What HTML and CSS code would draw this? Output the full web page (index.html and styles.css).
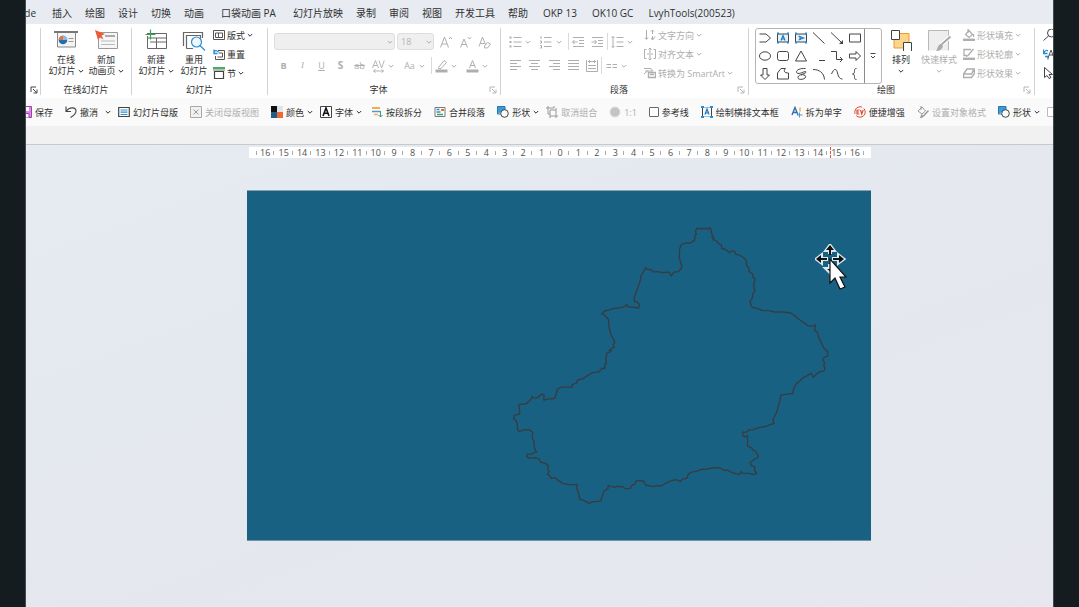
FILE: index.html
```html
<!DOCTYPE html>
<html lang="zh-CN">
<head>
<meta charset="utf-8">
<title>幻灯片编辑</title>
<link rel="stylesheet" href="styles.css">
</head>
<body>
<svg class="sprite" aria-hidden="true">
  <symbol id="chev" viewBox="0 0 6 6"><path d="M.8 2 3 4.2 5.2 2" fill="none" stroke="currentColor"/></symbol>
  <symbol id="launch" viewBox="0 0 8 8"><path d="M1 6V1h5M3 3l3.500 3.500M7 3.500V7H3.500" fill="none" stroke="currentColor" stroke-width=".9"/></symbol>
  <symbol id="shapes" viewBox="0 0 12 12"><path d="M.5 8V.5H8V4" fill="#3d9ad8" stroke="#2379b8"/><path d="M.5 8H4" stroke="#2379b8"/><circle cx="7.500" cy="7.500" r="3.800" fill="#fafafa" stroke="#444"/></symbol>
</svg>
<div class="app">
  <nav class="tabs" aria-label="功能区">
    <button class="tab tab-cut">de</button>
    <button class="tab">插入</button>
    <button class="tab">绘图</button>
    <button class="tab">设计</button>
    <button class="tab">切换</button>
    <button class="tab">动画</button>
    <button class="tab tab-wide">口袋动画 PA</button>
    <button class="tab tab-wide">幻灯片放映</button>
    <button class="tab">录制</button>
    <button class="tab">审阅</button>
    <button class="tab">视图</button>
    <button class="tab">开发工具</button>
    <button class="tab">帮助</button>
    <button class="tab tab-addin">OKP 13</button>
    <button class="tab tab-addin">OK10 GC</button>
    <button class="tab tab-addin">LvyhTools(200523)</button>
  </nav>

  <div class="ribbon">
    <section class="group group-cut">
      <div class="group-body"></div>
      <div class="group-foot"><h2></h2><button class="launcher" aria-label="更多设置"><svg><use href="#launch"/></svg></button></div>
    </section>

    <section class="group group-online">
      <div class="group-body">
        <button class="big">
          <svg class="i-big" viewBox="0 0 24 20"><path d="M3.500 2v15h18V2" fill="#f4f4f4" stroke="#888"/><path d="M0 2h24" stroke="#777" stroke-width="2"/><circle cx="9" cy="10" r="4.300" fill="#1f6fb5"/><path d="M9 10V5.700A4.300 4.300 0 0 0 4.700 10z" fill="#e8743b"/><path d="M9 10h4.300A4.300 4.300 0 0 0 9 5.700z" fill="#8fb8dc"/><path d="M14.500 8.500h5M14.500 11.500h5" stroke="#999"/></svg>
          <span>在线</span><span class="with-chev">幻灯片<svg class="chev"><use href="#chev"/></svg></span>
        </button>
        <button class="big">
          <svg class="i-big" viewBox="0 0 24 20"><path d="M4.500 2.500h19v16h-19z" fill="#f6f6f6" stroke="#999"/><path d="M11 6h10" stroke="#aaa" stroke-width="2"/><path d="M7 11h14M7 14.500h14" stroke="#bbb"/><path d="M1 0l10 4-3.500 1.500 2 4-3.500-2L4 10z" fill="#ee5a36"/></svg>
          <span>新加</span><span class="with-chev">动画页<svg class="chev"><use href="#chev"/></svg></span>
        </button>
      </div>
      <div class="group-foot"><h2>在线幻灯片</h2></div>
    </section>

    <section class="group group-slides">
      <div class="group-body">
        <button class="big">
          <svg class="i-big" viewBox="0 0 24 20"><path d="M3 3.500h19.500v15H3.500V6M4 8h18M12.500 8v10M6 12h16" fill="none" stroke="#666"/><path d="M6.500-.5v10M1.500 4.500h10" stroke="#2fa84f" stroke-width="1.200"/></svg>
          <span>新建</span><span class="with-chev">幻灯片<svg class="chev"><use href="#chev"/></svg></span>
        </button>
        <button class="big">
          <svg class="i-big" viewBox="0 0 24 20"><path d="M1.500 16V2.500h19V8M4.500 18.500v-13h14v3M4.500 18.500H11" fill="none" stroke="#666" stroke-width="1.200"/><circle cx="14.500" cy="12" r="5" fill="#eef7fd" stroke="#2a8fd0" stroke-width="1.200"/><path d="M18 15.500l5 5" stroke="#2a8fd0" stroke-width="1.300"/></svg>
          <span>重用</span><span>幻灯片</span>
        </button>
        <div class="stack">
          <button class="row-btn"><svg class="i12" viewBox="0 0 12 12"><path d="M.5 1.500h11v9H.5zM2.500 4h7M2.500 4v4.500h3V4M5.500 8.500h4V4" fill="none" stroke="#555"/></svg>版式<svg class="chev"><use href="#chev"/></svg></button>
          <button class="row-btn"><svg class="i12" viewBox="0 0 12 12"><path d="M5 2.500h6.500v9h-9V8M5.500 5h4v4h-5" fill="none" stroke="#555"/><path d="M1 5.500C1 2.500 3 1.500 5.500 4M1 1.500v4h3.500" fill="none" stroke="#2a8fd0" stroke-width="1.300"/></svg>重置</button>
          <button class="row-btn"><svg class="i12" viewBox="0 0 12 12"><path d="M0 1h12" stroke="#2fa84f" stroke-width="1.800"/><path d="M1.500 4.500h9v7h-9z" fill="none" stroke="#444" stroke-width="1.200"/><path d="M0 3h12" stroke="#777"/></svg>节<svg class="chev"><use href="#chev"/></svg></button>
        </div>
      </div>
      <div class="group-foot"><h2>幻灯片</h2></div>
    </section>

    <section class="group group-font">
      <div class="group-body is-off">
        <div class="tool-rows">
          <div class="tool-row">
            <span class="pick pick-font"><select disabled aria-label="字体"><option></option></select><svg class="chev"><use href="#chev"/></svg></span>
            <span class="pick pick-size"><select disabled aria-label="字号"><option>18</option></select><svg class="chev"><use href="#chev"/></svg></span>
            <button class="tool" disabled aria-label="增大字号"><svg class="i14" viewBox="0 0 14 14"><path d="M1.500 12.500L5.500 2l4 10.500M3 9h5M10 4l1.500-1.800L13 4" fill="none" stroke="currentColor"/></svg></button>
            <button class="tool" disabled aria-label="减小字号"><svg class="i14" viewBox="0 0 14 14"><path d="M2.500 12.500L6 4l3.500 8.500M4 9.500h4M10 2.200L11.500 4 13 2.200" fill="none" stroke="currentColor"/></svg></button>
            <button class="tool" disabled aria-label="清除格式"><svg class="i14" viewBox="0 0 14 14"><path d="M2 11.500L5.500 2l3 7.500M3.500 8.500h4M7.500 11l3-3.500 3 1.500-3 4-3-.2z" fill="none" stroke="currentColor"/></svg></button>
          </div>
          <div class="tool-row">
            <button class="tool bold" disabled>B</button>
            <button class="tool italic" disabled>I</button>
            <button class="tool under" disabled>U</button>
            <button class="tool bold shadow" disabled>S</button>
            <button class="tool strike" disabled>ab</button>
            <button class="tool drop" disabled aria-label="字符间距"><svg class="i14" viewBox="0 0 14 14"><path d="M1 9l3-7.500L7 9M2 6.500h4M7.500 1.500L10 9l2.800-7.500M2 12h10M4 10.500L2 12l2 1.500M10 10.500l2 1.500-2 1.500" fill="none" stroke="currentColor" stroke-width=".9"/></svg><svg class="chev"><use href="#chev"/></svg></button>
            <button class="tool drop" disabled><span>Aa</span><svg class="chev"><use href="#chev"/></svg></button>
            <span class="sep"></span>
            <button class="tool drop" disabled aria-label="突出显示"><svg class="i14" viewBox="0 0 14 14"><path d="M1 12h12" stroke="currentColor" stroke-width="3"/><path d="M4 8.500L9.500 1.500l2.500 2-5.500 6H4z" fill="none" stroke="currentColor"/></svg><svg class="chev"><use href="#chev"/></svg></button>
            <button class="tool drop" disabled aria-label="字体颜色"><svg class="i14" viewBox="0 0 14 14"><path d="M1 12h12" stroke="currentColor" stroke-width="3"/><path d="M4 9l3-7.500L10 9M5 6.500h4" fill="none" stroke="currentColor"/></svg><svg class="chev"><use href="#chev"/></svg></button>
          </div>
        </div>
      </div>
      <div class="group-foot"><h2>字体</h2><button class="launcher is-off" aria-label="字体设置"><svg><use href="#launch"/></svg></button></div>
    </section>

    <section class="group group-para">
      <div class="group-body is-off">
        <div class="tool-rows">
          <div class="tool-row">
            <button class="tool drop" disabled aria-label="项目符号"><svg class="i14" viewBox="0 0 14 14"><path d="M1 2.500h2M1 7h2M1 11.500h2" stroke="currentColor" stroke-width="2"/><path d="M5 2.500h8M5 7h8M5 11.500h8" stroke="currentColor"/></svg><svg class="chev"><use href="#chev"/></svg></button>
            <button class="tool drop" disabled aria-label="编号"><svg class="i14" viewBox="0 0 14 14"><path d="M1.500 1v3M.5 6H2v2H.5M.5 10.500H2V13H.5M4.500 2.500H12M4.500 7H12M4.500 11.500H12" fill="none" stroke="currentColor"/></svg><svg class="chev"><use href="#chev"/></svg></button>
            <span class="sep"></span>
            <button class="tool" disabled aria-label="减少缩进"><svg class="i14" viewBox="0 0 14 14"><path d="M1 2.500h11M7 5.500h5M7 8.500h5M1 11.500h11M5.500 7h-5M2.500 5l-2 2 2 2" fill="none" stroke="currentColor"/></svg></button>
            <button class="tool" disabled aria-label="增加缩进"><svg class="i14" viewBox="0 0 14 14"><path d="M1 2.500h11M7 5.500h5M7 8.500h5M1 11.500h11M.5 7h5M3.500 5l2 2-2 2" fill="none" stroke="currentColor"/></svg></button>
            <span class="sep"></span>
            <button class="tool drop" disabled aria-label="行距"><svg class="i14" viewBox="0 0 14 14"><path d="M2.500 1.500v11M1 3l1.500-1.500L4 3M1 11l1.500 1.500L4 11M6 2.500h7M6 7h7M6 11.500h7" fill="none" stroke="currentColor"/></svg><svg class="chev"><use href="#chev"/></svg></button>
          </div>
          <div class="tool-row">
            <button class="tool" disabled aria-label="左对齐"><svg class="i14" viewBox="0 0 14 14"><path d="M1 1.500h11M1 4.500h7M1 7.500h11M1 10.500h7" stroke="currentColor"/></svg></button>
            <button class="tool" disabled aria-label="居中"><svg class="i14" viewBox="0 0 14 14"><path d="M1 1.500h11M3 4.500h7M1 7.500h11M3 10.500h7" stroke="currentColor"/></svg></button>
            <button class="tool" disabled aria-label="右对齐"><svg class="i14" viewBox="0 0 14 14"><path d="M2 1.500h11M6 4.500h7M2 7.500h11M6 10.500h7" stroke="currentColor"/></svg></button>
            <button class="tool" disabled aria-label="两端对齐"><svg class="i14" viewBox="0 0 14 14"><path d="M2 1.500h11M2 4.500h11M2 7.500h11M2 10.500h11" stroke="currentColor"/></svg></button>
            <button class="tool" disabled aria-label="分散对齐"><svg class="i14" viewBox="0 0 14 14"><path d="M1.500 1v11.500h11V1M3 2.500h8M4.500 1v3M9.500 1v3M3 6.500h8M3 9.500h8" fill="none" stroke="currentColor"/></svg></button>
            <span class="sep"></span>
            <button class="tool drop" disabled aria-label="分栏"><svg class="i14" viewBox="0 0 14 14"><path d="M2 5.500h4.500M8 5.500h4.500M2 8.500h4.500M8 8.500h4.500" stroke="currentColor"/></svg><svg class="chev"><use href="#chev"/></svg></button>
          </div>
        </div>
        <div class="stack">
          <button class="row-btn" disabled><svg class="i12" viewBox="0 0 12 12"><path d="M2.500 1v9M1 8.500L2.500 10.500 4 8.500M8.500 11V7M7 2.500L8.500 1 10 2.500M8.500 1v4M7 9l1.500 2L11 7.500" fill="none" stroke="currentColor"/></svg>文字方向<svg class="chev"><use href="#chev"/></svg></button>
          <button class="row-btn" disabled><svg class="i12" viewBox="0 0 12 12"><path d="M2.500 1.500h-2v9h2M9.500 1.500h2v9h-2M6 0v5M4.500 1.500L6 0l1.500 1.500M6 12V7M4.500 10.500L6 12l1.500-1.500M3 6h6" fill="none" stroke="currentColor"/></svg>对齐文本<svg class="chev"><use href="#chev"/></svg></button>
          <button class="row-btn" disabled><svg class="i12" viewBox="0 0 12 12"><path d="M0 1.500h7l2 2.500H3.500L0 7M1 4h3" fill="none" stroke="currentColor"/><path d="M4.500 5.500h7v5h-7zM6 7.500h4" fill="none" stroke="currentColor" stroke-width="1.400"/></svg>转换为 SmartArt<svg class="chev"><use href="#chev"/></svg></button>
        </div>
      </div>
      <div class="group-foot"><h2>段落</h2><button class="launcher is-off" aria-label="段落设置"><svg><use href="#launch"/></svg></button></div>
    </section>

    <section class="group group-draw">
      <div class="group-body">
        <div class="gallery">
          <div class="gallery-grid">
            <button aria-label="延期"><svg class="i14" viewBox="0 0 14 14"><path d="M1.500 3H8l4.500 4L8 11H1.500" fill="none" stroke="#444"/></svg></button>
            <button aria-label="横排文本框"><svg class="i14" viewBox="0 0 14 14"><path d="M1.500 3h11v8h-11z" fill="#e6f3fc" stroke="#444"/><path d="M1 2.500h2M11 2.500h2M1 11.500h2M11 11.500h2" stroke="#2a8fd0" stroke-width="2"/><path d="M5 9.500L7 4.500l2 5M5.500 8h3" fill="none" stroke="#1b78bd" stroke-width="1.200"/></svg></button>
            <button aria-label="竖排文本框"><svg class="i14" viewBox="0 0 14 14"><path d="M1.500 3h11v8h-11z" fill="#e6f3fc" stroke="#444"/><path d="M1 2.500h2M11 2.500h2M1 11.500h2M11 11.500h2" stroke="#2a8fd0" stroke-width="2"/><path d="M4.500 5l5 2-5 2M6 5.500v3" fill="none" stroke="#1b78bd" stroke-width="1.200"/></svg></button>
            <button aria-label="直线"><svg class="i14" viewBox="0 0 14 14"><path d="M1 1.500l11.500 11" stroke="#444"/></svg></button>
            <button aria-label="箭头"><svg class="i14" viewBox="0 0 14 14"><path d="M1 1.500l11 10.500" stroke="#444"/><path d="M13 13H9l4-4z" fill="#444"/></svg></button>
            <button aria-label="矩形"><svg class="i14" viewBox="0 0 14 14"><path d="M1.500 3h11v8h-11z" fill="none" stroke="#444"/></svg></button>
            <button aria-label="椭圆"><svg class="i14" viewBox="0 0 14 14"><ellipse cx="7" cy="7" rx="5.500" ry="4.200" fill="none" stroke="#444"/></svg></button>
            <button aria-label="圆角矩形"><svg class="i14" viewBox="0 0 14 14"><rect x="1.500" y="2.500" width="11" height="9" rx="2" fill="none" stroke="#444"/></svg></button>
            <button aria-label="三角形"><svg class="i14" viewBox="0 0 14 14"><path d="M7 2l5.500 10h-11z" fill="none" stroke="#444"/></svg></button>
            <button aria-label="连接线"><svg class="i14" viewBox="0 0 14 14"><path d="M7 11.500h6" stroke="#444"/></svg></button>
            <button aria-label="肘形箭头"><svg class="i14" viewBox="0 0 14 14"><path d="M1 2.500h5.500v8H12M10 8l2.500 2.500L10 13" fill="none" stroke="#444"/></svg></button>
            <button aria-label="右箭头"><svg class="i14" viewBox="0 0 14 14"><path d="M1.500 5H8V2.500L12.500 7 8 11.500V9H1.500z" fill="none" stroke="#444"/></svg></button>
            <button aria-label="下箭头"><svg class="i14" viewBox="0 0 14 14"><path d="M5 1.500h4V8h2.500L7 12.500 2.500 8H5z" fill="none" stroke="#444"/></svg></button>
            <button aria-label="任意多边形"><svg class="i14" viewBox="0 0 14 14"><path d="M1.500 12V6L5 1.500h4.500C7 4 8.500 6 12.500 6v6z" fill="none" stroke="#444"/></svg></button>
            <button aria-label="自由曲线"><svg class="i14" viewBox="0 0 14 14"><path d="M11.500 1.500C5 1 1 4 3 6s9-3 9-1-7 2-8 5 5 3 7 1-1-4-4-3" fill="none" stroke="#444"/></svg></button>
            <button aria-label="弧形"><svg class="i14" viewBox="0 0 14 14"><path d="M1 2.500c6 0 11 3 11.500 10" fill="none" stroke="#444"/></svg></button>
            <button aria-label="曲线"><svg class="i14" viewBox="0 0 14 14"><path d="M1.500 7C4 1 6.500 1 7.500 6s3 6 5 6" fill="none" stroke="#444"/></svg></button>
            <button aria-label="左大括号"><svg class="i14" viewBox="0 0 14 14"><path d="M8.500 1.500C7 1.500 6.500 2 6.500 3.500S6.500 7 4.500 7c2 0 2 2 2 3.500s.5 2 2 2" fill="none" stroke="#444"/></svg></button>
          </div>
          <button class="gallery-more" aria-label="更多形状"><svg class="i14" viewBox="0 0 14 14"><path d="M4.500 4.500h5M5 7l2 2 2-2" fill="none" stroke="#444"/></svg></button>
        </div>
        <button class="big">
          <svg class="i-big" viewBox="0 0 24 20"><path d="M5 3.500h15V18H5z" fill="#fcd58a" stroke="#f09a2e"/><path d="M2.500.5h8v9h-8z" fill="#fff" stroke="#444"/><path d="M14.500 21v-8.500h8V21" fill="#fff" stroke="#444"/></svg>
          <span>排列</span><svg class="chev"><use href="#chev"/></svg>
        </button>
        <button class="big" disabled>
          <svg class="i-big" viewBox="0 0 24 20"><path d="M1.500 20.500V.5h20v20" fill="#eee" stroke="#b8b8b8"/><path d="M23.500 6.500L14 15" stroke="#fff" stroke-width="4"/><path d="M23.500 6.500L14 15" stroke="#aaa" stroke-width="2"/><path d="M14 14l2 2c-1 4-4 5-7 5 2-2 1-6 5-7z" fill="#aaa"/></svg>
          <span>快速样式</span><svg class="chev"><use href="#chev"/></svg>
        </button>
        <div class="stack stack-end">
          <button class="row-btn" disabled><svg class="i12" viewBox="0 0 12 12"><path d="M0 10.800h12" stroke="currentColor" stroke-width="2.400"/><path d="M2.500 5.500L6 1.500l3.500 4L6 8.500zM5 0v4M10.500 5v3" fill="none" stroke="currentColor" stroke-width="1.200"/></svg>形状填充<svg class="chev"><use href="#chev"/></svg></button>
          <button class="row-btn" disabled><svg class="i12" viewBox="0 0 12 12"><path d="M0 10.800h12" stroke="currentColor" stroke-width="2.400"/><path d="M8 1.500H1v6h3M10.500 1L5 7.500l-2 1" fill="none" stroke="currentColor" stroke-width="1.300"/></svg>形状轮廓<svg class="chev"><use href="#chev"/></svg></button>
          <button class="row-btn" disabled><svg class="i12" viewBox="0 0 12 12"><path d="M4 2h7L8.500 7h-8zM.5 7.500v3h8l3-4V2.500" fill="none" stroke="currentColor" stroke-width="1.500"/></svg>形状效果<svg class="chev"><use href="#chev"/></svg></button>
        </div>
      </div>
      <div class="group-foot"><h2>绘图</h2><button class="launcher is-off" aria-label="绘图设置"><svg><use href="#launch"/></svg></button></div>
    </section>

    <section class="group group-edit">
      <div class="group-body">
        <div class="stack">
          <button class="row-btn" aria-label="查找"><svg class="i12" viewBox="0 0 12 12"><circle cx="8.500" cy="4" r="4" fill="none" stroke="#444"/><path d="M5.500 7L.5 11.500" stroke="#444"/></svg></button>
          <button class="row-btn" aria-label="替换"><svg class="i12" viewBox="0 0 12 12"><path d="M.5 1.500v4h4M1 5c1-3 3-3 4-2M2 8.500h3v3" fill="none" stroke="#2a8fd0" stroke-width="1.300"/><path d="M5 10l3-8 3 8M6 7h4" fill="none" stroke="#555"/></svg></button>
          <button class="row-btn" aria-label="选择"><svg class="i12" viewBox="0 0 12 12"><path d="M1.500.5v10L4 8.500l2 3 2-1-2-3h3.500z" fill="#fff" stroke="#444"/></svg></button>
        </div>
      </div>
    </section>
  </div>

  <div class="quickbar">
    <div class="quick-set">
      <button class="quick"><svg class="i12" viewBox="0 0 12 12"><path d="M.5.5h11v11H.5z" fill="#d58be0" stroke="#a63cb5"/><path d="M3 1h6v4H3z" fill="#fff"/><path d="M3 7.500h6V12H3z" fill="#fff" stroke="#a63cb5"/></svg>保存</button>
      <button class="quick quick-undo"><svg class="i12" viewBox="0 0 12 12"><path d="M1 .5v5h5M1 5.500C5 0 11 1.500 11 5c0 3-3 5-5.500 6.500" fill="none" stroke="#444" stroke-width="1.100"/></svg>撤消<svg class="chev"><use href="#chev"/></svg></button>
      <button class="quick"><svg class="i12" viewBox="0 0 12 12"><path d="M.7 1.500h10.600v9H.7z" fill="#fff" stroke="#444" stroke-width="1.200"/><path d="M2.500 4h7M2.500 6.200h7M2.500 8.500h7" stroke="#2a8fd0" stroke-width="1.200"/></svg>幻灯片母版</button>
      <button class="quick" disabled><svg class="i12" viewBox="0 0 12 12"><path d="M.5.5h11v11H.5z" fill="#f2f2f2" stroke="#aaa"/><path d="M3.500 3.500l5 5M8.500 3.500l-5 5" stroke="#999"/></svg>关闭母版视图</button>
      <button class="quick"><svg class="i12" viewBox="0 0 12 12"><path d="M0 0h6v6H0z" fill="#111"/><path d="M6 0h6v6H6z" fill="#dce5ec"/><path d="M0 6h6v6H0z" fill="#1d5f86"/><path d="M6 6h6v6H6z" fill="#ec6a32"/></svg>颜色<svg class="chev"><use href="#chev"/></svg></button>
      <button class="quick"><svg class="i12" viewBox="0 0 12 12"><path d="M.5.5h11v11H.5z" fill="#fff" stroke="#444"/><path d="M3 10l3-8 3 8M4 7.200h4" fill="none" stroke="#111" stroke-width="1.600"/></svg>字体<svg class="chev"><use href="#chev"/></svg></button>
    </div>
    <div class="quick-set">
      <button class="quick"><svg class="i12" viewBox="0 0 12 12"><path d="M1 2h8" stroke="#efb04c" stroke-width="2"/><path d="M1 5.500h8" stroke="#5c95c6" stroke-width="1.500"/><path d="M3 8.500h4" stroke="#efb04c" stroke-width="1.500"/><path d="M9.500 5v6M7.500 9l2 2 2-2" fill="none" stroke="#2a9d8f"/></svg>按段拆分</button>
      <button class="quick"><svg class="i12" viewBox="0 0 12 12"><path d="M1 1.500h10v9H1z" fill="#fff" stroke="#777"/><path d="M2.500 3.500h3M2.500 6h4" stroke="#2a8fd0" stroke-width="1.500"/><path d="M7 4h3" stroke="#ec6a32" stroke-width="2"/><path d="M3 8.500h6" stroke="#3aa35b" stroke-width="1.500"/></svg>合并段落</button>
      <button class="quick"><svg class="i12"><use href="#shapes"/></svg>形状<svg class="chev"><use href="#chev"/></svg></button>
      <button class="quick" disabled><svg class="i12" viewBox="0 0 12 12"><path d="M2 0v8M0 2h8V0M4 4h6v6H4zM10 2v2M2 8h2M10 10v2M12 10h-2M4 10v2" fill="none" stroke="#999"/></svg>取消组合</button>
      <button class="quick" disabled><svg class="i12" viewBox="0 0 12 12"><circle cx="6" cy="6" r="5" fill="#c4c4c4" stroke="#ddd"/></svg>1:1</button>
      <label class="quick"><input type="checkbox">参考线</label>
      <button class="quick"><svg class="i12" viewBox="0 0 12 12"><path d="M1.500 1.500v9M10.500 1.500v9" stroke="#444"/><path d="M1.500 1.500h9M1.500 10.500h9" stroke="#8cc4ea"/><path d="M0 1h3M9 1h3M0 11h3M9 11h3" stroke="#2a8fd0" stroke-width="2"/><path d="M4 8.500L6 3l2 5.500M4.500 7h3" fill="none" stroke="#1b78bd" stroke-width="1.200"/></svg>绘制横排文本框</button>
      <button class="quick"><svg class="i12" viewBox="0 0 12 12"><path d="M1 9L4 1.500 7 9M2 6.500h4" fill="none" stroke="#2f6eb0" stroke-width="1.400"/><path d="M9 1.500v4" stroke="#efb04c" stroke-width="1.500"/><path d="M8.500 6.500v5M6 9h5.500" stroke="#4a9ad4"/></svg>拆为单字</button>
      <button class="quick"><svg class="i12" viewBox="0 0 12 12"><circle cx="6" cy="6" r="5.200" fill="#fff" stroke="#dc4a33" stroke-dasharray="12 2"/><path d="M5.500 4H3v4h2.500M3 6h2M6.500 4l1.300 4L9.200 4" fill="none" stroke="#dc4a33" stroke-width="1.200"/></svg>便捷增强</button>
      <button class="quick" disabled><svg class="i12" viewBox="0 0 12 12"><path d="M1 5l4-4 3.500 4L5 8zM4 0v4" fill="none" stroke="#999"/><path d="M11.500 4.500L7 9.500l-3 2 1-3" fill="none" stroke="#999" stroke-width="1.500"/></svg>设置对象格式</button>
      <button class="quick"><svg class="i12"><use href="#shapes"/></svg>形状<svg class="chev"><use href="#chev"/></svg></button>
      <label class="quick"><input type="checkbox" disabled aria-label="选项"></label>
    </div>
  </div>
  <div class="strip"></div>

  <main class="workspace">
    <div class="ruler">
      <ol>
        <li>16</li><li>15</li><li>14</li><li>13</li><li>12</li><li>11</li><li>10</li><li>9</li><li>8</li><li>7</li><li>6</li><li>5</li><li>4</li><li>3</li><li>2</li><li>1</li><li>0</li><li>1</li><li>2</li><li>3</li><li>4</li><li>5</li><li>6</li><li>7</li><li>8</li><li>9</li><li>10</li><li>11</li><li>12</li><li>13</li><li>14</li><li>15</li><li>16</li>
      </ol>
      <span class="ruler-mark"></span>
    </div>
    <div class="slide">
      <svg class="map" viewBox="0 0 1872 1053" role="img" aria-label="地图轮廓">
        <path transform="translate(1029 -3)" d="M33 540L46 537 45 527 50 522 48 513 51 493 60 489 65 485 58 484 66 478 74 474 70 466 75 461 70 447 65 440 58 415 56 390 50 384 43 376 35 374 40 370 44 365 58 362 75 357 95 355 106 351 110 345 117 353 133 354 147 356 150 346 144 339 135 337 134 325 138 313 148 286 153 270 154 260 159 252 168 234 172 239 185 240 192 247 205 246 219 249 239 248 246 259 254 248 267 246 276 237 278 232 272 212 270 203 271 177 277 163 290 160 304 160 317 151 316 139 322 132 318 126 323 116 340 117 353 116 358 119 361 113 366 118 367 131 371 138 368 142 375 143 371 150 382 153 388 162 397 166 398 176 412 181 421 189 429 184 438 187 440 194 451 196 462 203 471 211 474 229 481 237 480 245 491 253 493 264 499 269 494 286 498 305 492 312 490 326 483 337 489 354 505 357 520 363 540 364 556 368 583 368 606 371 616 378 627 387 657 409 673 411 681 407 678 423 687 430 691 446 703 469 705 476 718 489 718 501 708 504 703 513 709 521 706 526 709 540"/>
        <path transform="translate(759 507)" d="M979 30L976 36 965 38 955 44 944 55 938 43 930 47 926 50 911 58 905 65 892 76 885 90 882 104 866 106 846 109 844 124 838 145 833 162 822 184 826 194 800 203 780 207 763 213 749 214 744 220 731 221 731 230 738 235 746 231 746 263 759 268 761 274 771 279 778 293 778 297 762 305 754 313 757 321 768 325 767 335 773 345 764 349 750 345 730 344 727 340 722 348 710 346 697 341 686 335 676 336 662 328 642 328 621 333 610 332 593 338 577 341 567 347 563 359 549 363 543 370 531 364 516 367 500 374 486 383 471 382 463 385 438 380 432 368 413 366 409 369 406 378 398 380 392 390 376 391 370 385 360 386 356 383 345 387 334 384 325 382 325 391 313 398 309 409 303 428 291 430 278 430 266 436 260 430 240 423 236 405 230 389 232 378 206 379 188 375 170 363 166 358 153 360 149 352 142 348 147 339 143 332 145 323 137 315 122 312 118 303 108 298 87 299 79 293 81 287 95 287 100 283 110 280 104 273 102 265 101 248 96 236 98 222 89 214 73 213 57 219 52 213 51 194 45 183 40 180 42 170 57 166 59 157 55 138 62 137 79 135 94 120 95 113 100 117 113 117 125 105 132 109 131 124 147 120 159 120 165 117 169 104 173 90 184 85 217 85 217 77 231 72 232 64 249 59 276 42 299 38 303 31"/>
      </svg>
      <svg class="cursor" viewBox="0 0 32 46" aria-hidden="true">
        <path d="M15 3v7M13 15H4M17 15h9M15 20v6M15 2l-3 4h6zM2 15l4-3v6zM28 15l-4-3v6zM12 25h6l-3 3z" fill="#dceaf1" stroke="#dceaf1" stroke-width="4"/>
        <path d="M15 3v8M12 15H4M18 15h8" stroke="#111" stroke-width="2"/>
        <path d="M15 1l-4 5h8zM1 15l5-4v8zM29 15l-5-4v8zM12 25h4v3z" fill="#111"/>
        <path d="M15 15v24l5-5 5 11 5-2-5-10h6z" fill="#fff" stroke="#111" stroke-width="1.200"/>
      </svg>
    </div>
  </main>
</div>
</body>
</html>
```
FILE: styles.css
```css
* { box-sizing: border-box; }

body {
  margin: 0;
  background: #151c20;
  color: #303030;
  font: 9px/11px "Open Sans", "Noto Sans CJK SC", sans-serif;
}

button {
  margin: 0;
  padding: 0;
  border: 0;
  background: none;
  color: inherit;
  font: inherit;
  white-space: nowrap;
}

button:disabled, .is-off { color: #aeaeae; }

svg { display: block; flex: none; }
.sprite { position: absolute; width: 0; height: 0; }
.chev { width: 6px; height: 6px; }
.i12 { width: 12px; height: 12px; }
.i14 { width: 14px; height: 14px; }
.i-big { width: 24px; height: 20px; overflow: visible; }

.app {
  display: flex;
  flex-direction: column;
  min-height: 100vh;
  margin: 0 26px;
  overflow: hidden;
  background: #e6eaf0;
  outline: 1px solid #454b4f;
}

/* Tab strip */
.tabs {
  display: flex;
  align-items: center;
  gap: 13px;
  height: 24px;
  padding-top: 2px;
  background: #e8ecf2;
  font-size: 10px;
  line-height: 14px;
}
.tab-cut { display: flex; justify-content: flex-end; width: 10px; margin-right: 3px; }
.tab-wide { margin-left: 4px; }
.tab-addin { margin-left: 2px; }

/* Ribbon */
.ribbon {
  display: flex;
  padding: 4px 0 3px;
  background: #fff;
}
.group {
  display: flex;
  flex: none;
  flex-direction: column;
  border-right: 1px solid #d2d2d2;
}
.group-cut { width: 15px; }
.group-cut .launcher { width: 10px; }
.group-online { width: 91px; }
.group-slides { width: 136px; }
.group-font { width: 233px; }
.group-para { width: 248px; }
.group-draw { width: 286px; }
.group-edit { flex: 1; border: 0; padding-left: 8px; }
.group-body { display: flex; height: 56px; }
.group-online .group-body,
.group-slides .group-body,
.group-para .group-body { padding-left: 5px; }
.group-font .group-body,
.group-draw .group-body { padding-left: 6px; }
.group-foot { display: flex; align-items: center; height: 11px; }
.group-foot h2 {
  flex: 1;
  margin: 0;
  font-size: 9px;
  font-weight: 400;
  text-align: center;
}
.launcher { width: 11px; }
.launcher svg { width: 8px; height: 8px; }

.big {
  display: flex;
  flex-direction: column;
  align-items: center;
  width: 38px;
  padding-top: 2px;
}
.group-online .big { width: 40px; }
.big .i-big { margin-bottom: 4px; }
.big > .chev { margin-top: 3px; }
.with-chev { display: flex; align-items: center; gap: 2px; }

.stack { display: flex; flex-direction: column; gap: 5px; }
.stack-end { padding-left: 5px; }
.row-btn {
  display: flex;
  align-items: center;
  gap: 2px;
  height: 14px;
}

.tool-rows {
  display: flex;
  flex-direction: column;
  gap: 7px;
  padding-top: 5px;
}
.group-para .tool-rows { width: 138px; }
.tool-row { display: flex; height: 17px; }
.tool {
  display: flex;
  align-items: center;
  justify-content: center;
  width: 19px;
}
.drop { justify-content: flex-start; width: 31px; }
.drop > :first-child { width: 19px; }
.drop > .i14 { padding: 0 2px; }
.bold { font-weight: 700; }
.italic { font-style: italic; font-family: "Liberation Serif", serif; }
.under { text-decoration: underline; }
.shadow { font-size: 10px; }
.strike { text-decoration: line-through; }
.sep { width: 1px; background: #dadada; }

.pick { display: grid; align-items: center; margin-right: 2px; }
.pick > * { grid-area: 1 / 1; }
.pick .chev { justify-self: end; margin-right: 2px; }
.pick-font { width: 121px; }
.pick-size { width: 37px; }
.pick select {
  width: 100%;
  height: 17px;
  padding: 0 3px;
  appearance: none;
  border: 1px solid #dedede;
  border-radius: 3px;
  background: #efefef;
  color: #b4b4b4;
  font: inherit;
  opacity: 1;
}

.gallery {
  display: flex;
  width: 127px;
  border: 1px solid #b5b5b5;
  border-radius: 3px;
}
.gallery-grid { display: grid; flex: 1; grid-template-columns: repeat(6, 1fr); }
.gallery-grid button { display: grid; place-items: center; }
.gallery-more {
  display: grid;
  place-items: center;
  width: 17px;
  border-left: 1px solid #8c8c8c;
}

/* Quick access bar */
.quickbar {
  display: flex;
  gap: 14px;
  height: 28px;
  margin-left: -6px;
  background: #fafafa;
}
.quick-set { display: flex; flex: none; align-items: center; gap: 12px; }
.quick { display: flex; align-items: center; gap: 3px; }
.quick .chev { margin-right: -5px; }
.quick-undo .chev { margin-left: 4px; }
.quick input {
  width: 10px;
  height: 10px;
  margin: 0;
  appearance: none;
  border: 1px solid #666;
  border-radius: 1px;
  background: #fff;
}
.quick input:disabled { border-color: #bbb; }

.strip {
  height: 19px;
  border-bottom: 1px solid #c9c9cb;
  background: #f2f1f1;
}

/* Editing area */
.workspace {
  display: grid;
  flex: 1;
  grid-template-columns: 221fr 624fr 182fr;
  grid-template-rows: auto auto;
  align-content: start;
  row-gap: 32px;
  padding-top: 2px;
  background: linear-gradient(160deg, #e6ebf1, #e4e7ee 60%, #e7e8ef);
}
.ruler {
  position: relative;
  grid-column: 2;
  margin: 0 0 0 2px;
  padding: 0 7px;
  background: #fff;
}
.ruler ol {
  display: grid;
  grid-template-columns: repeat(33, 1fr);
  margin: 0;
  padding: 0;
  list-style: none;
  color: #505050;
  text-align: center;
}
.ruler li { background: linear-gradient(#aaa, #aaa) right center / 1px 4px no-repeat; }
.ruler li:first-child {
  background:
    linear-gradient(#aaa, #aaa) left center / 1px 4px no-repeat,
    linear-gradient(#aaa, #aaa) right center / 1px 4px no-repeat;
}
.ruler-mark {
  position: absolute;
  top: 0;
  bottom: 0;
  left: 93.4%;
  border-left: 1px dashed #e0523f;
}
.slide {
  position: relative;
  grid-column: 2;
  aspect-ratio: 16 / 9;
  border-top: 1px solid #86a2b4;
  border-bottom: 1px solid #6f93a8;
  background: #186183;
}
.map { width: 100%; height: 100%; }
.map path {
  fill: none;
  stroke: #373c40;
  stroke-width: 4;
  stroke-linejoin: round;
}
.cursor {
  position: absolute;
  top: 15.300%;
  left: 91%;
  width: 32px;
  height: 46px;
}
```
